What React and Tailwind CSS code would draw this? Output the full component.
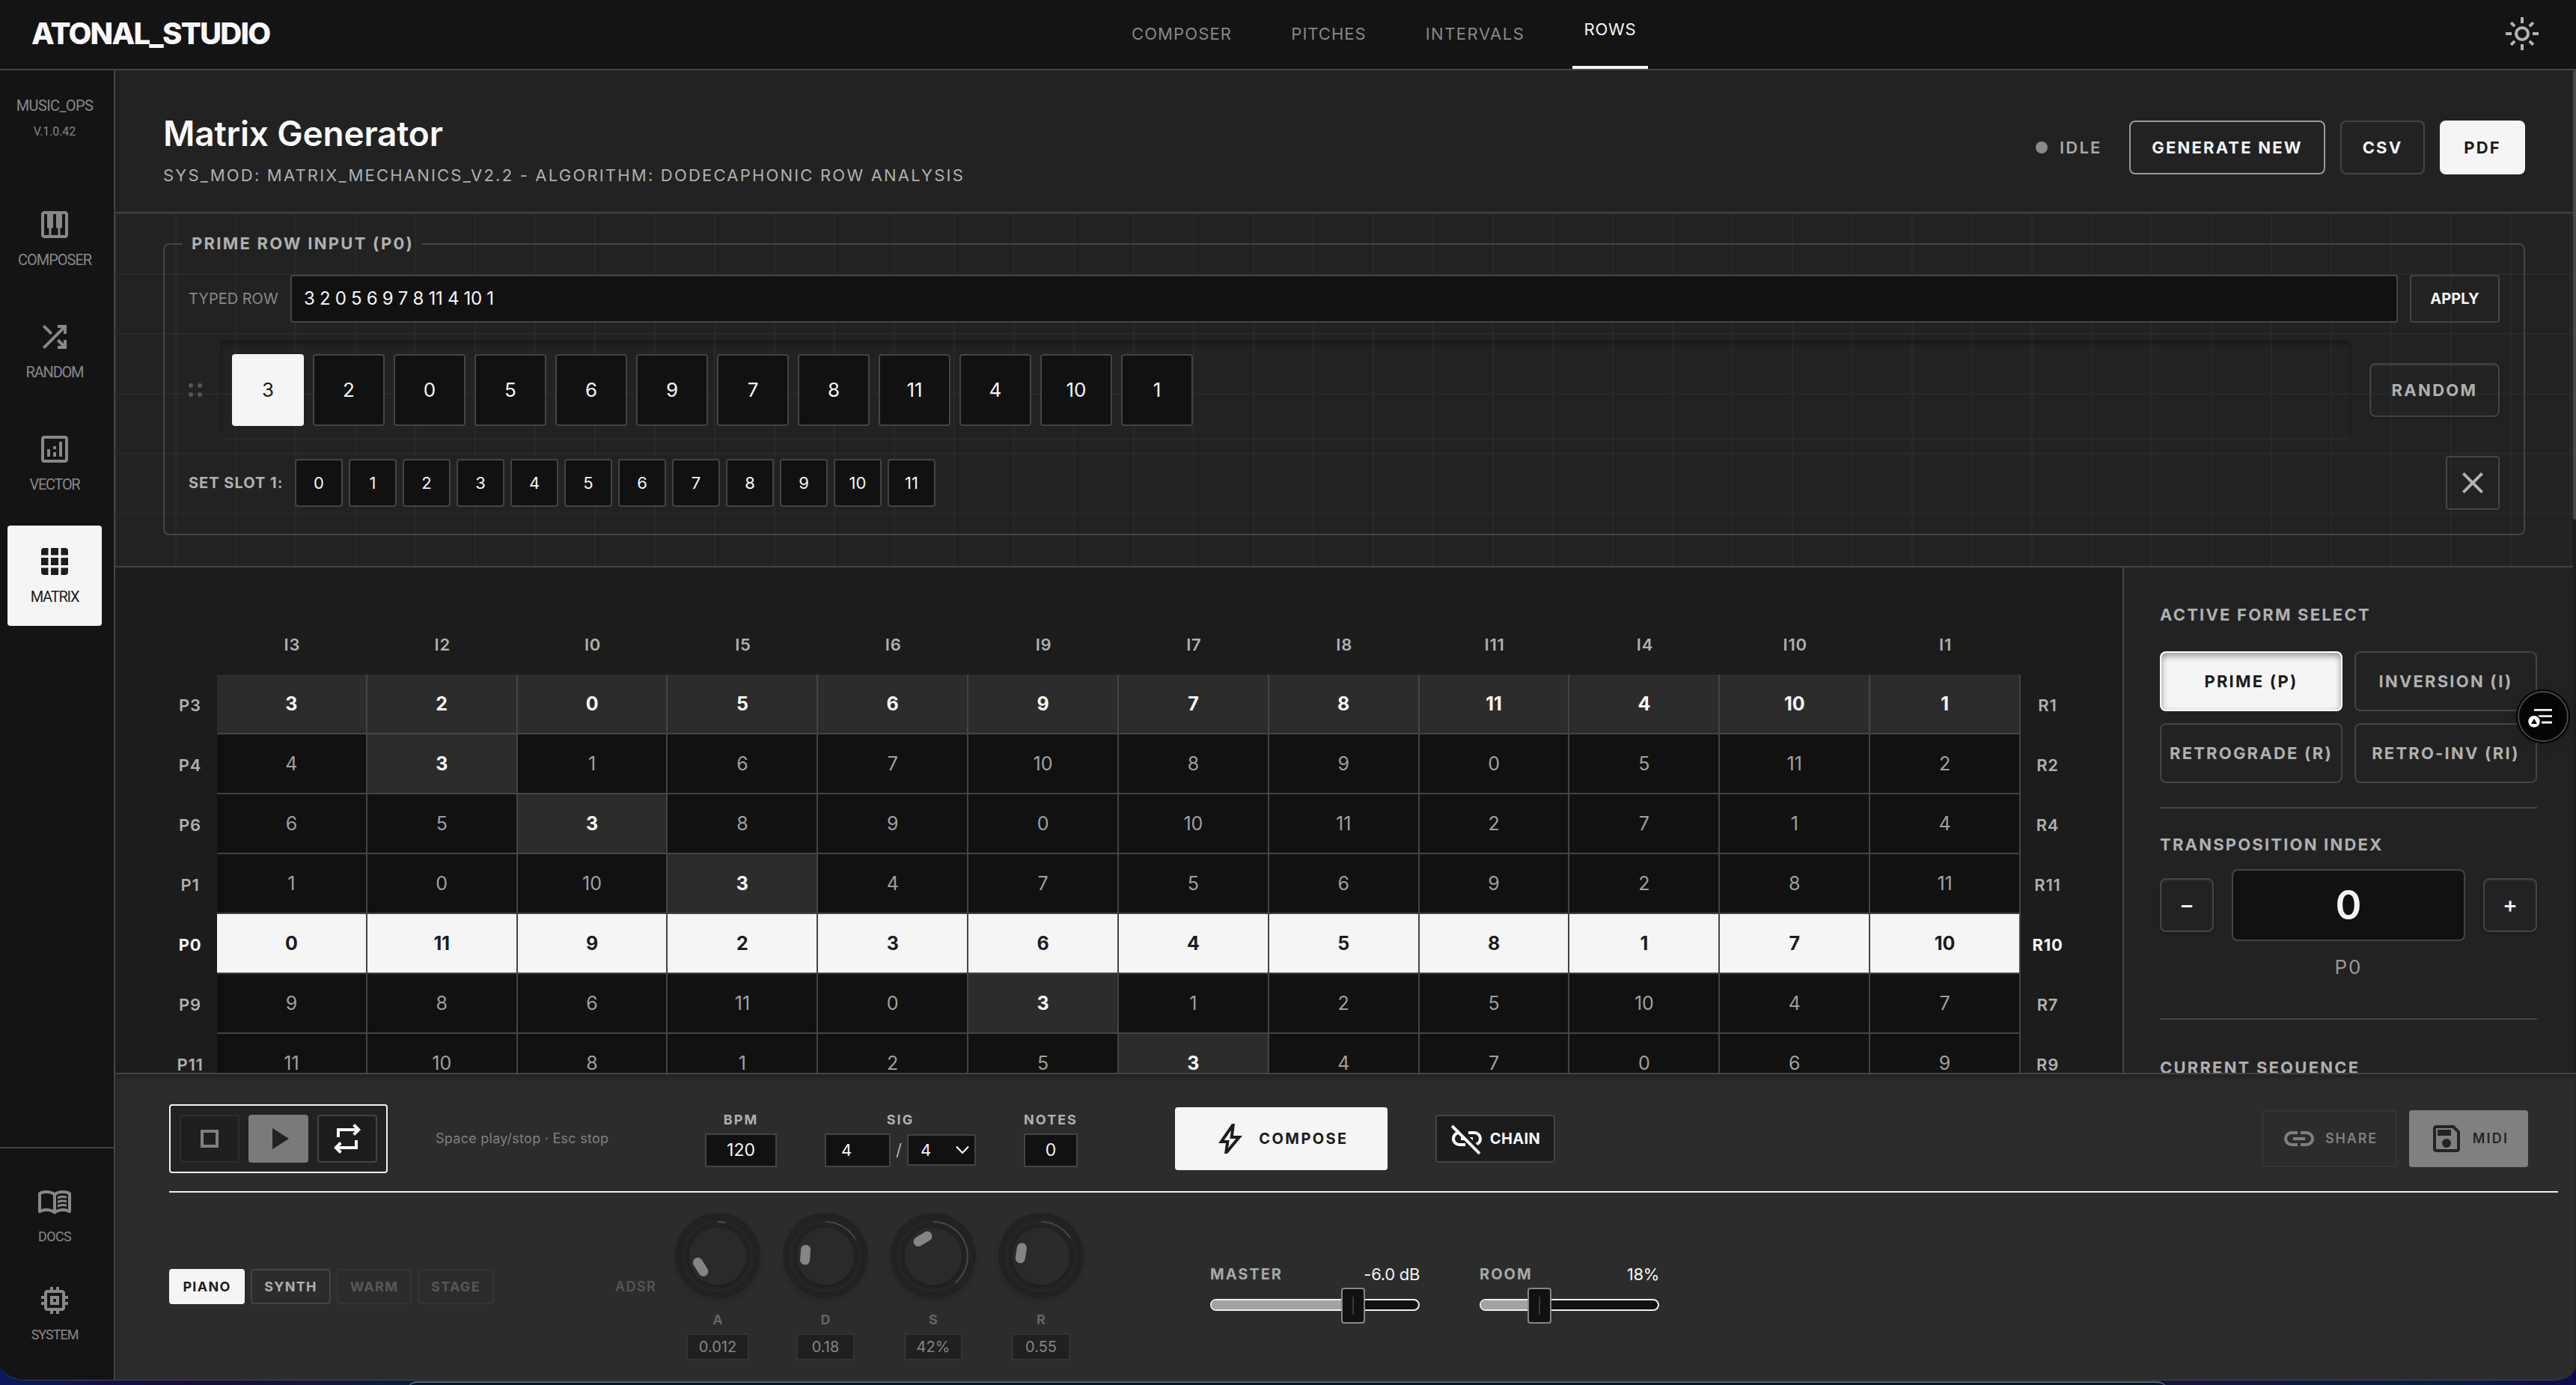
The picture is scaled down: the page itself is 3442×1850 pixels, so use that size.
import { MdPiano } from "react-icons/md";

const row = [3, 2, 0, 5, 6, 9, 7, 8, 11, 4, 10, 1];
const transpositions = [3, 4, 6, 1, 0, 9, 11];
const slots = [0, 1, 2, 3, 4, 5, 6, 7, 8, 9, 10, 11];

const icons = {
  sun: "M480-360q50 0 85-35t35-85q0-50-35-85t-85-35q-50 0-85 35t-35 85q0 50 35 85t85 35Zm0 80q-83 0-141.5-58.5T280-480q0-83 58.5-141.5T480-680q83 0 141.5 58.5T680-480q0 83-58.5 141.5T480-280ZM200-440H40v-80h160v80Zm720 0H760v-80h160v80ZM440-760v-160h80v160h-80Zm0 720v-160h80v160h-80ZM256-650l-101-97 57-59 96 100-52 56Zm492 496-97-101 53-55 101 97-57 59Zm-98-550 97-101 59 57-100 96-56-52ZM154-212l101-97 55 53-97 101-59-57Z",
  shuffle: "M560-160v-80h104L537-367l57-57 126 126v-102h80v240H560Zm-344 0-56-56 504-504H560v-80h240v240h-80v-104L216-160Zm151-377L160-744l56-56 207 207-56 56Z",
  analytics: "M280-280h80v-200h-80v200Zm320 0h80v-400h-80v400Zm-160 0h80v-120h-80v120Zm0-200h80v-80h-80v80ZM200-120q-33 0-56.5-23.5T120-200v-560q0-33 23.5-56.5T200-840h560q33 0 56.5 23.5T840-760v560q0 33-23.5 56.5T760-120H200Zm0-80h560v-560H200v560Z",
  book: "M560-564v-68q33-14 67.5-21t72.5-7q26 0 51 4t49 10v64q-24-9-48.5-13.5T700-600q-38 0-73 9.5T560-564Zm0 220v-68q33-14 67.5-21t72.5-7q26 0 51 4t49 10v64q-24-9-48.5-13.5T700-380q-38 0-73 9t-67 27Zm0-110v-68q33-14 67.5-21t72.5-7q26 0 51 4t49 10v64q-24-9-48.5-13.5T700-490q-38 0-73 9.5T560-454ZM260-320q47 0 91.5 10.5T440-278v-394q-41-24-87-36t-93-12q-36 0-71.5 7T120-692v396q35-12 69.5-18t70.5-6Zm260 42q44-21 88.5-31.5T700-320q36 0 70.5 6t69.5 18v-396q-33-14-68.5-21t-71.5-7q-47 0-93 12t-87 36v394Zm-40 118q-48-38-104-59t-116-21q-42 0-82.5 11T100-198q-21 11-40.5-1T40-234v-482q0-11 5.5-21T62-752q46-24 96-36t102-12q58 0 113.5 15T480-740q51-30 106.5-45T700-800q52 0 102 12t96 36q11 5 16.5 15t5.5 21v482q0 23-19.5 35t-40.5 1q-37-20-77.5-31T700-240q-60 0-116 21t-104 59Z",
  memory: "M360-360v-240h240v240H360Zm80-80h80v-80h-80v80Zm-80 320v-80h-80q-33 0-56.5-23.5T200-280v-80h-80v-80h80v-80h-80v-80h80v-80q0-33 23.5-56.5T280-760h80v-80h80v80h80v-80h80v80h80q33 0 56.5 23.5T760-680v80h80v80h-80v80h80v80h-80v80q0 33-23.5 56.5T680-200h-80v80h-80v-80h-80v80h-80Zm320-160v-400H280v400h400Z",
  close: "m256-200-56-56 224-224-224-224 56-56 224 224 224-224 56 56-224 224 224 224-56 56-224-224-224 224Z",
  stop: "M320-640v320-320Zm-80 400v-480h480v480H240Zm80-80h320v-320H320v320Z",
  play: "M320-200v-560l440 280-440 280Z",
  repeat: "M280-80 120-240l160-160 56 58-62 62h406v-160h80v240H274l62 62-56 58Zm-80-440v-240h486l-62-62 56-58 160 160-160 160-56-58 62-62H280v160h-80Z",
  bolt: "m422-232 207-248H469l29-227-185 267h139l-30 208ZM320-80l40-280H160l360-520h80l-40 320h240L400-80h-80Z",
  linkOff: "m770-302-60-62q40-11 65-42.5t25-73.5q0-50-35-85t-85-35H520v-80h160q83 0 141.5 58.5T880-480q0 57-29.5 105T770-302ZM634-440l-80-80h86v80h-6ZM792-56 56-792l56-56 736 736-56 56ZM440-280H280q-83 0-141.5-58.5T80-480q0-69 42-123t108-71l74 74h-24q-50 0-85 35t-35 85q0 50 35 85t85 35h160v80ZM320-440v-80h65l79 80H320Z",
  link: "M440-280H280q-83 0-141.5-58.5T80-480q0-83 58.5-141.5T280-680h160v80H280q-50 0-85 35t-35 85q0 50 35 85t85 35h160v80ZM320-440v-80h320v80H320Zm200 160v-80h160q50 0 85-35t35-85q0-50-35-85t-85-35H520v-80h160q83 0 141.5 58.5T880-480q0 83-58.5 141.5T680-280H520Z",
  save: "M840-680v480q0 33-23.5 56.5T760-120H200q-33 0-56.5-23.5T120-200v-560q0-33 23.5-56.5T200-840h480l160 160Zm-80 34L646-760H200v560h560v-446ZM480-240q50 0 85-35t35-85q0-50-35-85t-85-35q-50 0-85 35t-35 85q0 50 35 85t85 35ZM240-560h360v-160H240v160Z",
};

function Icon({ name }) {
  return (
    <svg viewBox="0 -960 960 960" className="h-12 w-12 shrink-0 fill-current">
      <path d={icons[name]} />
    </svg>
  );
}

function GridIcon() {
  return (
    <svg viewBox="0 0 48 48" className="h-12 w-12 fill-current">
      <path d="M10 6h5.5v9.5H6V10a4 4 0 0 1 4-4ZM19 6h10v9.5H19zM32.500 6H38a4 4 0 0 1 4 4v5.500h-9.500zM6 19h9.500v10H6zM19 19h10v10H19zM32.500 19H42v10h-9.500zM6 32.500h9.500V42H10a4 4 0 0 1-4-4zM19 32.500h10V42H19zM32.500 32.500H42V38a4 4 0 0 1-4 4h-5.500z" />
    </svg>
  );
}

function Header() {
  return (
    <header className="flex h-[94px] shrink-0 justify-between border-b-2 border-[#444] bg-[#141414] px-10">
      <div className="flex w-[321px] items-center pb-[2px] pl-[2px] text-[40px] font-extrabold tracking-[-1.75px] text-[#f8f8f8]">
        ATONAL_STUDIO
      </div>
      <nav className="mr-[1px] flex gap-12 text-[22px] text-[#888]">
        <span className="flex w-[166px] items-center justify-center pb-[2px] tracking-[1.1px]">COMPOSER</span>
        <span className="flex w-[131px] items-center justify-center pb-[2px] tracking-[1px]">PITCHES</span>
        <span className="flex w-[164px] items-center justify-center pb-[2px] tracking-[1.5px]">INTERVALS</span>
        <span className="flex w-[101px] items-center justify-center border-b-4 border-[#f5f5f5] pb-[10px] tracking-[0.8px] text-[#f5f5f5]">
          ROWS
        </span>
      </nav>
      <div className="flex w-16 items-center justify-center pb-[2px] text-[#b3b3b3]">
        <Icon name="sun" />
      </div>
    </header>
  );
}

function Sidebar() {
  return (
    <aside className="flex w-[154px] shrink-0 flex-col border-r-2 border-[#444] bg-[#141414] font-['Roboto',sans-serif] text-[20px] text-[#888]">
      <div className="flex flex-col items-center gap-4 pr-[6px] pt-[33px]">
        <div className="text-center">
          <div className="h-7 leading-7 tracking-[-0.6px]">MUSIC_OPS</div>
          <div className="mt-[9px] h-6 text-[16px] leading-6 tracking-[-0.1px]">V.1.0.42</div>
        </div>
        <div className="mt-12 flex h-[134px] w-[126px] flex-col items-center pt-6">
          <MdPiano className="h-12 w-12" />
          <span className="mt-[11px] leading-6 tracking-[-1px]">COMPOSER</span>
        </div>
        <div className="flex h-[134px] w-[126px] flex-col items-center pt-6">
          <Icon name="shuffle" />
          <span className="mt-[11px] leading-6 tracking-[-1.2px]">RANDOM</span>
        </div>
        <div className="flex h-[134px] w-[126px] flex-col items-center pt-6">
          <Icon name="analytics" />
          <span className="mt-[11px] leading-6 tracking-[-1.3px]">VECTOR</span>
        </div>
        <div className="flex h-[134px] w-[126px] flex-col items-center rounded-sm bg-[#f5f5f5] pt-6 text-[#1c1c1c]">
          <GridIcon />
          <span className="mt-[11px] leading-6 tracking-[-1.2px]">MATRIX</span>
        </div>
      </div>
      <div className="mt-auto flex h-[312px] flex-col items-center border-t-2 border-[#444] pr-[6px] pt-12 text-[18px]">
        <Icon name="book" />
        <span className="mt-[10px] leading-6 tracking-[-0.7px]">DOCS</span>
        <div className="mt-[49px]">
          <Icon name="memory" />
        </div>
        <span className="mt-[10px] leading-6 tracking-[-1px]">SYSTEM</span>
      </div>
    </aside>
  );
}

function TitleBar() {
  return (
    <section className="flex h-[191px] items-start justify-between border-b-2 border-[#444] bg-[#222] px-16">
      <div className="pt-[56px]">
        <h1 className="h-14 text-[46px] font-semibold leading-[56px] tracking-[-0.2px] text-[#f8f8f8]">Matrix Generator</h1>
        <p className="mt-3.5 text-[22px] leading-7 tracking-[2.2px] text-[#b0b0b0]">
          SYS_MOD: MATRIX_MECHANICS_V2.2 - ALGORITHM: DODECAPHONIC ROW ANALYSIS
        </p>
      </div>
      <div className="mt-[67px] flex h-[72px] items-stretch gap-5 text-[22px] font-bold tracking-[2.2px] text-[#f5f5f5]">
        <div className="flex w-[105px] items-center gap-4 font-semibold text-[#a8a8a8]">
          <span className="h-4 w-4 rounded-full bg-[#8a8a8a]" />
          IDLE
        </div>
        <button className="w-[262px] rounded-lg border-2 border-[#999]">GENERATE NEW</button>
        <button className="w-[113px] rounded-lg border-2 border-[#444]">CSV</button>
        <button className="w-[114px] rounded-lg bg-[#f5f5f5] text-[#1c1c1c]">PDF</button>
      </div>
    </section>
  );
}

function RowInput() {
  return (
    <section className="h-[473px] border-b-2 border-[#444] bg-[#222] bg-[linear-gradient(to_right,#292929_2px,transparent_2px),linear-gradient(to_bottom,#292929_2px,transparent_2px)] bg-[size:80px_80px] px-16 pt-[25px]">
      <fieldset className="h-[405px] rounded-lg border-2 border-[#444] px-8 pt-[25px]">
        <legend className="-ml-2 h-8 w-[320px] pl-[12px] text-[22px] font-bold leading-[30px] tracking-[2.25px] text-[#b0b0b0]">
          PRIME ROW INPUT (P0)
        </legend>

        <div className="flex h-16 items-stretch">
          <span className="flex w-[136px] items-center text-[20px] text-[#888]">TYPED ROW</span>
          <div className="flex flex-1 items-center rounded-sm border-2 border-[#444] bg-[#111] pl-4 text-[24px] tracking-[-0.3px] text-[#f5f5f5]">
            {row.join(" ")}
          </div>
          <button className="ml-4 w-[120px] rounded-sm border-2 border-[#444] text-[20px] font-bold tracking-[0.1px] text-[#f5f5f5]">
            APPLY
          </button>
        </div>

        <div className="mt-6 flex items-center gap-6">
          <div className="grid w-[18px] grid-cols-2 gap-[6px]">
            <span className="h-[6px] w-[6px] rounded-full bg-[#555]" />
            <span className="h-[6px] w-[6px] rounded-full bg-[#555]" />
            <span className="h-[6px] w-[6px] rounded-full bg-[#555]" />
            <span className="h-[6px] w-[6px] rounded-full bg-[#555]" />
          </div>
          <div className="flex h-[132px] flex-1 items-center gap-3 rounded-lg px-4 shadow-[inset_0_4px_4px_rgba(0,0,0,0.3),inset_0_-2px_0_#2b2b2b]">
            {row.map((n, i) => (
              <div
                key={n}
                className={
                  i === 0
                    ? "flex h-24 w-24 items-center justify-center rounded-sm bg-[#f5f5f5] text-[26px] text-[#1c1c1c]"
                    : "flex h-24 w-24 items-center justify-center rounded-sm border-2 border-[#444] bg-[#111] text-[26px] text-[#f5f5f5]"
                }
              >
                {n}
              </div>
            ))}
          </div>
          <button className="h-[72px] w-[174px] rounded-lg border-2 border-[#444] text-[22px] font-bold tracking-[2.3px] text-[#b0b0b0] shadow-[inset_0_2px_2px_rgba(255,255,255,0.06),0_2px_4px_rgba(0,0,0,0.3)]">
            RANDOM
          </button>
        </div>

        <div className="mt-[22px] flex items-center">
          <span className="w-[142px] text-[20px] font-bold tracking-[1px] text-[#b0b0b0]">SET SLOT 1:</span>
          <div className="flex gap-2 text-[22px] text-[#f5f5f5]">
            {slots.map((n) => (
              <div key={n} className="flex h-16 w-16 items-center justify-center rounded-sm border-2 border-[#444] bg-[#111]">
                {n}
              </div>
            ))}
          </div>
          <button className="ml-auto flex h-[72px] w-[72px] items-center justify-center rounded-sm border-2 border-[#444] text-[#b3b3b3]">
            <Icon name="close" />
          </button>
        </div>
      </fieldset>
    </section>
  );
}

function cellClass(t, n) {
  if (t === 0) return "flex h-20 items-center justify-center border-b-2 border-r-2 border-[#444] bg-[#f5f5f5] font-bold text-[#1c1c1c]";
  if (t === 3 || n === 3) return "flex h-20 items-center justify-center border-b-2 border-r-2 border-[#444] bg-[#2c2c2c] font-bold text-[#f8f8f8]";
  return "flex h-20 items-center justify-center border-b-2 border-r-2 border-[#444] bg-[#111] text-[#a0a0a0]";
}

function Matrix() {
  return (
    <div className="flex-1 overflow-hidden bg-[#1c1c1c] px-16 pt-[63px]">
      <div className="grid grid-cols-[72px_repeat(12,minmax(0,1fr))_72px] text-[25px]">
        <span />
        {row.map((n) => (
          <span key={n} className="flex h-20 items-center justify-center text-[22px] font-semibold tracking-[0.8px] text-[#b0b0b0]">
            I{n}
          </span>
        ))}
        <span />
        {transpositions.map((t) => (
          <MatrixRow key={t} t={t} />
        ))}
      </div>
    </div>
  );
}

function MatrixRow({ t }) {
  const values = row.map((n) => (n + t + 9) % 12);
  const label =
    t === 0
      ? "flex h-20 items-center justify-center pt-[2px] text-[22px] font-bold tracking-[0.8px] text-[#f5f5f5]"
      : "flex h-20 items-center justify-center pt-[2px] text-[22px] font-semibold tracking-[0.8px] text-[#b0b0b0]";
  return (
    <>
      <span className={label}>P{t}</span>
      {values.map((n, i) => (
        <span key={i} className={cellClass(t, n)}>
          {n}
        </span>
      ))}
      <span className={label}>R{values[11]}</span>
    </>
  );
}

function FormPanel() {
  return (
    <div className="w-[602px] shrink-0 overflow-hidden border-l-2 border-[#444] bg-[#222] px-12 pt-[49px] text-[22px] font-bold tracking-[2.2px] text-[#b0b0b0]">
      <h2 className="h-7 leading-7">ACTIVE FORM SELECT</h2>
      <div className="mt-[35px] grid grid-cols-2 gap-4">
        <button className="h-20 rounded-lg border-2 border-white bg-[#f5f5f5] text-[#1c1c1c] shadow-[inset_0_4px_8px_rgba(0,0,0,0.4)]">
          PRIME (P)
        </button>
        <button className="h-20 rounded-lg border-2 border-[#444]">INVERSION (I)</button>
        <button className="h-20 whitespace-nowrap rounded-lg border-2 border-[#444]">RETROGRADE (R)</button>
        <button className="h-20 whitespace-nowrap rounded-lg border-2 border-[#444]">RETRO-INV (RI)</button>
      </div>
      <div className="mt-8 h-[2px] bg-[#444]" />

      <h2 className="mt-[34px] h-7 leading-7">TRANSPOSITION INDEX</h2>
      <div className="mt-[19px] flex items-center gap-6 text-[#f5f5f5]">
        <button className="h-[72px] w-[72px] rounded-lg border-2 border-[#444] pb-[2px] text-[30px] font-medium tracking-normal shadow-[inset_0_2px_2px_rgba(255,255,255,0.06),0_2px_4px_rgba(0,0,0,0.3)]">
          −
        </button>
        <div className="flex h-24 flex-1 items-center justify-center rounded-lg border-2 border-[#444] bg-[#111] text-[53px] font-semibold tracking-normal">
          0
        </div>
        <button className="h-[72px] w-[72px] rounded-lg border-2 border-[#444] pb-[2px] text-[30px] font-medium tracking-normal shadow-[inset_0_2px_2px_rgba(255,255,255,0.06),0_2px_4px_rgba(0,0,0,0.3)]">
          +
        </button>
      </div>
      <div className="mt-[19px] h-8 text-center text-[26px] font-normal leading-8 tracking-[2px] text-[#999]">P0</div>
      <div className="mt-[52px] h-[2px] bg-[#444]" />
      <h2 className="mt-[50px] h-7 leading-7">CURRENT SEQUENCE</h2>
    </div>
  );
}

const knobs = [
  { label: "A", value: "0.012", turn: -32, arc: 12, shade: "#525252", box: "w-[84px]" },
  { label: "D", value: "0.18", turn: 4, arc: 60, shade: "#454545", box: "w-[78px]" },
  { label: "S", value: "42%", turn: 59, arc: 140, shade: "#484848", box: "w-[78px]" },
  { label: "R", value: "0.55", turn: 9, arc: 58, shade: "#454545", box: "w-[78px]" },
];

function Knob({ turn, arc, shade }) {
  const a = (arc * Math.PI) / 180;
  const x = 56 + 46 * Math.sin(a);
  const y = 57 - 46 * Math.cos(a);
  return (
    <div className="h-28 w-28 rounded-full bg-[#222] shadow-[0_0_0_1px_#232323,0_6px_8px_rgba(0,0,0,0.12)]">
      <svg viewBox="0 0 112 112" className="h-28 w-28">
        <circle cx="56" cy="57" r="46" fill="none" stroke="#282828" strokeWidth="2" />
        <path d={`M56 11A46 46 0 0 1 ${x} ${y}`} fill="none" stroke={shade} strokeWidth="2" />
        <circle cx="56" cy="58" r="40" fill="#1f1f1f" />
        <circle cx="56" cy="57" r="38.500" fill="#2a2a2a" />
        <rect x="22.500" y="43.500" width="13" height="27" rx="6.500" fill="#858585" transform={`rotate(${turn} 56 57)`} />
      </svg>
    </div>
  );
}

function Slider({ label, value, at, fill, width }) {
  return (
    <div className={width}>
      <div className="flex h-7 items-center justify-between">
        <span className="text-[20px] font-bold tracking-[2px] text-[#a8a8a8]">{label}</span>
        <span className="text-[22px] tracking-[-0.3px] text-[#f5f5f5]">{value}</span>
      </div>
      <div className="relative mt-1 flex h-12 items-center">
        <div className="mb-[2px] h-4 w-full overflow-hidden rounded-full border-2 border-[#eee] bg-[#111]">
          <div className="h-full bg-[#a3a3a3]" style={{ width: fill }} />
        </div>
        <div
          className="absolute top-0 flex h-12 w-8 items-center justify-center rounded border-2 border-[#888] bg-[#111]"
          style={{ left: at }}
        >
          <span className="h-6 w-[2px] bg-[#3a3a3a]" />
        </div>
      </div>
    </div>
  );
}

function Transport() {
  return (
    <footer className="flex h-[411px] shrink-0 flex-col border-t-2 border-[#444] bg-[#2c2c2c] pl-[72px] pr-6 shadow-[inset_0_4px_6px_rgba(0,0,0,0.25)]">
      <div className="flex h-[156px] items-center pb-6 pt-10">
        <div className="flex h-[92px] w-[292px] items-center justify-center gap-3 rounded border-2 border-[#f0f0f0] bg-[#222]">
          <span className="flex h-16 w-20 items-center justify-center rounded border-2 border-[#2e2e2e] bg-[#1f1f1f] text-[#808080]">
            <Icon name="stop" />
          </span>
          <span className="flex h-16 w-20 items-center justify-center rounded bg-[#7a7a7a] text-[#222]">
            <Icon name="play" />
          </span>
          <span className="flex h-16 w-20 items-center justify-center rounded border-2 border-[#444] bg-[#1c1c1c] text-[#f8f8f8]">
            <Icon name="repeat" />
          </span>
        </div>
        <span className="ml-16 w-[296px] text-[18px] tracking-[0.26px] text-[#808080]">Space play/stop · Esc stop</span>

        <div className="ml-16 flex w-24 flex-col text-center">
          <span className="h-6 text-[18px] font-bold leading-6 tracking-[2px] text-[#b0b0b0]">BPM</span>
          <span className="mt-1.5 flex h-[45px] items-center justify-center border-2 border-[#444] bg-[#111] text-[23px] text-[#f5f5f5]">120</span>
        </div>
        <div className="ml-16 flex w-[202px] flex-col text-center">
          <span className="h-6 text-[18px] font-bold leading-6 tracking-[2px] text-[#b0b0b0]">SIG</span>
          <div className="mt-1.5 flex h-[45px] items-center justify-between text-[22px] text-[#f5f5f5]">
            <span className="flex h-[45px] w-[88px] items-center border-2 border-[#444] bg-[#111] pl-5">4</span>
            <span className="text-[22px] text-[#b0b0b0]">/</span>
            <span className="flex h-[42px] w-[92px] items-center justify-between border-2 border-[#444] bg-[#111] pl-4 pr-[7px]">
              4
              <svg viewBox="0 0 18 12" className="h-3 w-[18px]" fill="none" stroke="currentColor" strokeWidth="2.200">
                <path d="M1 1.500l8 8.500 8-8.500" />
              </svg>
            </span>
          </div>
        </div>
        <div className="ml-16 flex w-[72px] flex-col text-center">
          <span className="h-6 text-[18px] font-bold leading-6 tracking-[2px] text-[#b0b0b0]">NOTES</span>
          <span className="mt-1.5 flex h-[45px] items-center justify-center border-2 border-[#444] bg-[#111] text-[23px] text-[#f5f5f5]">0</span>
        </div>

        <button className="ml-[130px] flex h-[84px] w-[284px] items-center justify-center gap-3.5 rounded bg-[#f5f5f5] pr-[2px] text-[20px] font-bold tracking-[2.4px] text-[#1c1c1c]">
          <Icon name="bolt" />
          COMPOSE
        </button>
        <button className="ml-16 flex h-16 w-40 items-center justify-center gap-[7px] rounded border-2 border-[#444] bg-[#1c1c1c] pr-[2px] text-[20px] font-bold tracking-[0.4px] text-[#f8f8f8]">
          <Icon name="linkOff" />
          CHAIN
        </button>

        <div className="ml-auto mr-10 flex gap-4 text-[18px] font-semibold">
          <button className="flex h-[76px] w-[181px] items-center justify-center gap-[11px] rounded border-2 border-[#363636] tracking-[1.8px] text-[#808080]">
            <Icon name="link" />
            SHARE
          </button>
          <button className="flex h-[76px] w-[159px] items-center justify-center gap-[11px] rounded bg-[#808080] tracking-[2.2px] text-[#242424]">
            <Icon name="save" />
            MIDI
          </button>
        </div>
      </div>
      <div className="h-[2px] shrink-0 bg-[#f0f0f0]" />

      <div className="flex flex-1 items-center">
        <div className="flex gap-2 text-[18px] font-bold tracking-[1.3px]">
          <button className="h-[47px] w-[101px] rounded-sm bg-[#f5f5f5] text-[#1c1c1c]">PIANO</button>
          <button className="h-[47px] w-[107px] rounded-sm border-2 border-[#444] text-[#b0b0b0]">SYNTH</button>
          <button className="h-[47px] w-[100px] rounded-sm border-2 border-[#353535] text-[#585858]">WARM</button>
          <button className="h-[47px] w-[102px] rounded-sm border-2 border-[#353535] text-[#585858]">STAGE</button>
        </div>
        <span className="ml-[162px] w-[81px] text-[18px] font-semibold tracking-[1.4px] text-[#555]">ADSR</span>
        <div className="flex gap-8">
          {knobs.map((k) => (
            <div key={k.label} className="flex w-28 flex-col items-center">
              <Knob turn={k.turn} arc={k.arc} shade={k.shade} />
              <span className="mt-[18px] h-6 text-[18px] font-bold leading-6 text-[#646464]">{k.label}</span>
              <span className={`mt-1.5 flex h-9 items-center justify-center border-2 border-[#333] bg-[#202020] text-[20px] text-[#858585] ${k.box}`}>
                {k.value}
              </span>
            </div>
          ))}
        </div>
        <div className="ml-[170px] mt-[19px] flex gap-20">
          <Slider label="MASTER" value="-6.0 dB" at="175px" fill="70%" width="w-[280px]" />
          <Slider label="ROOM" value="18%" at="64px" fill="30%" width="w-[240px]" />
        </div>
      </div>
    </footer>
  );
}

function AssistButton() {
  return (
    <div className="absolute left-[3362px] top-[921px] flex h-[72px] w-[72px] items-center justify-center rounded-full bg-black shadow-[0_4px_16px_rgba(0,0,0,0.15)]">
      <svg viewBox="0 0 72 72" className="h-[72px] w-[72px]">
        <circle cx="36" cy="36" r="33" fill="#050505" stroke="#484848" strokeWidth="2" />
        <path d="M24 27.300h24M29.500 35.700h18.500M34 44h14" stroke="#f0f0f0" strokeWidth="2.800" />
        <circle cx="24" cy="42.700" r="9.500" fill="#050505" />
        <circle cx="24" cy="42.700" r="7.700" fill="#fff" />
        <path d="M24 38.800l4 7.200h-8z" fill="#050505" />
      </svg>
    </div>
  );
}

export default function App() {
  return (
    <div className="relative h-[1850px] w-[3442px] overflow-hidden bg-[linear-gradient(to_right,#0a1a5c_0px,#180c3a_250px,#0f1c40_520px,#0e1624_700px,#0e1624_2800px,#141640_2920px,#0a1e42_3250px,#0c0a4c_3442px)] font-['Inter',sans-serif] leading-none">
      {/* edge of the dock behind the window */}
      <div className="absolute left-[542px] top-[1845px] h-6 w-[2356px] rounded-t-2xl border-t-2 border-[#4d6a80] bg-[#0c141e]" />

      <div className="relative flex h-[1844px] flex-col overflow-hidden border-b border-[#4a4a4a] bg-[#141414] [border-bottom-left-radius:36px_22px] [border-bottom-right-radius:32px_20px]">
        <Header />
        <div className="flex h-[1750px]">
          <Sidebar />
          <div className="flex flex-1 flex-col">
            <main className="relative h-[1339px] overflow-hidden bg-[#1e1e1e] pr-1">
              <TitleBar />
              <RowInput />
              <div className="flex h-[675px]">
                <Matrix />
                <FormPanel />
              </div>
              <div className="absolute right-0 top-0 h-[600px] w-1 rounded-full bg-[#4a4a4a]" />
            </main>
            <Transport />
          </div>
        </div>
      </div>

      <AssistButton />
    </div>
  );
}
